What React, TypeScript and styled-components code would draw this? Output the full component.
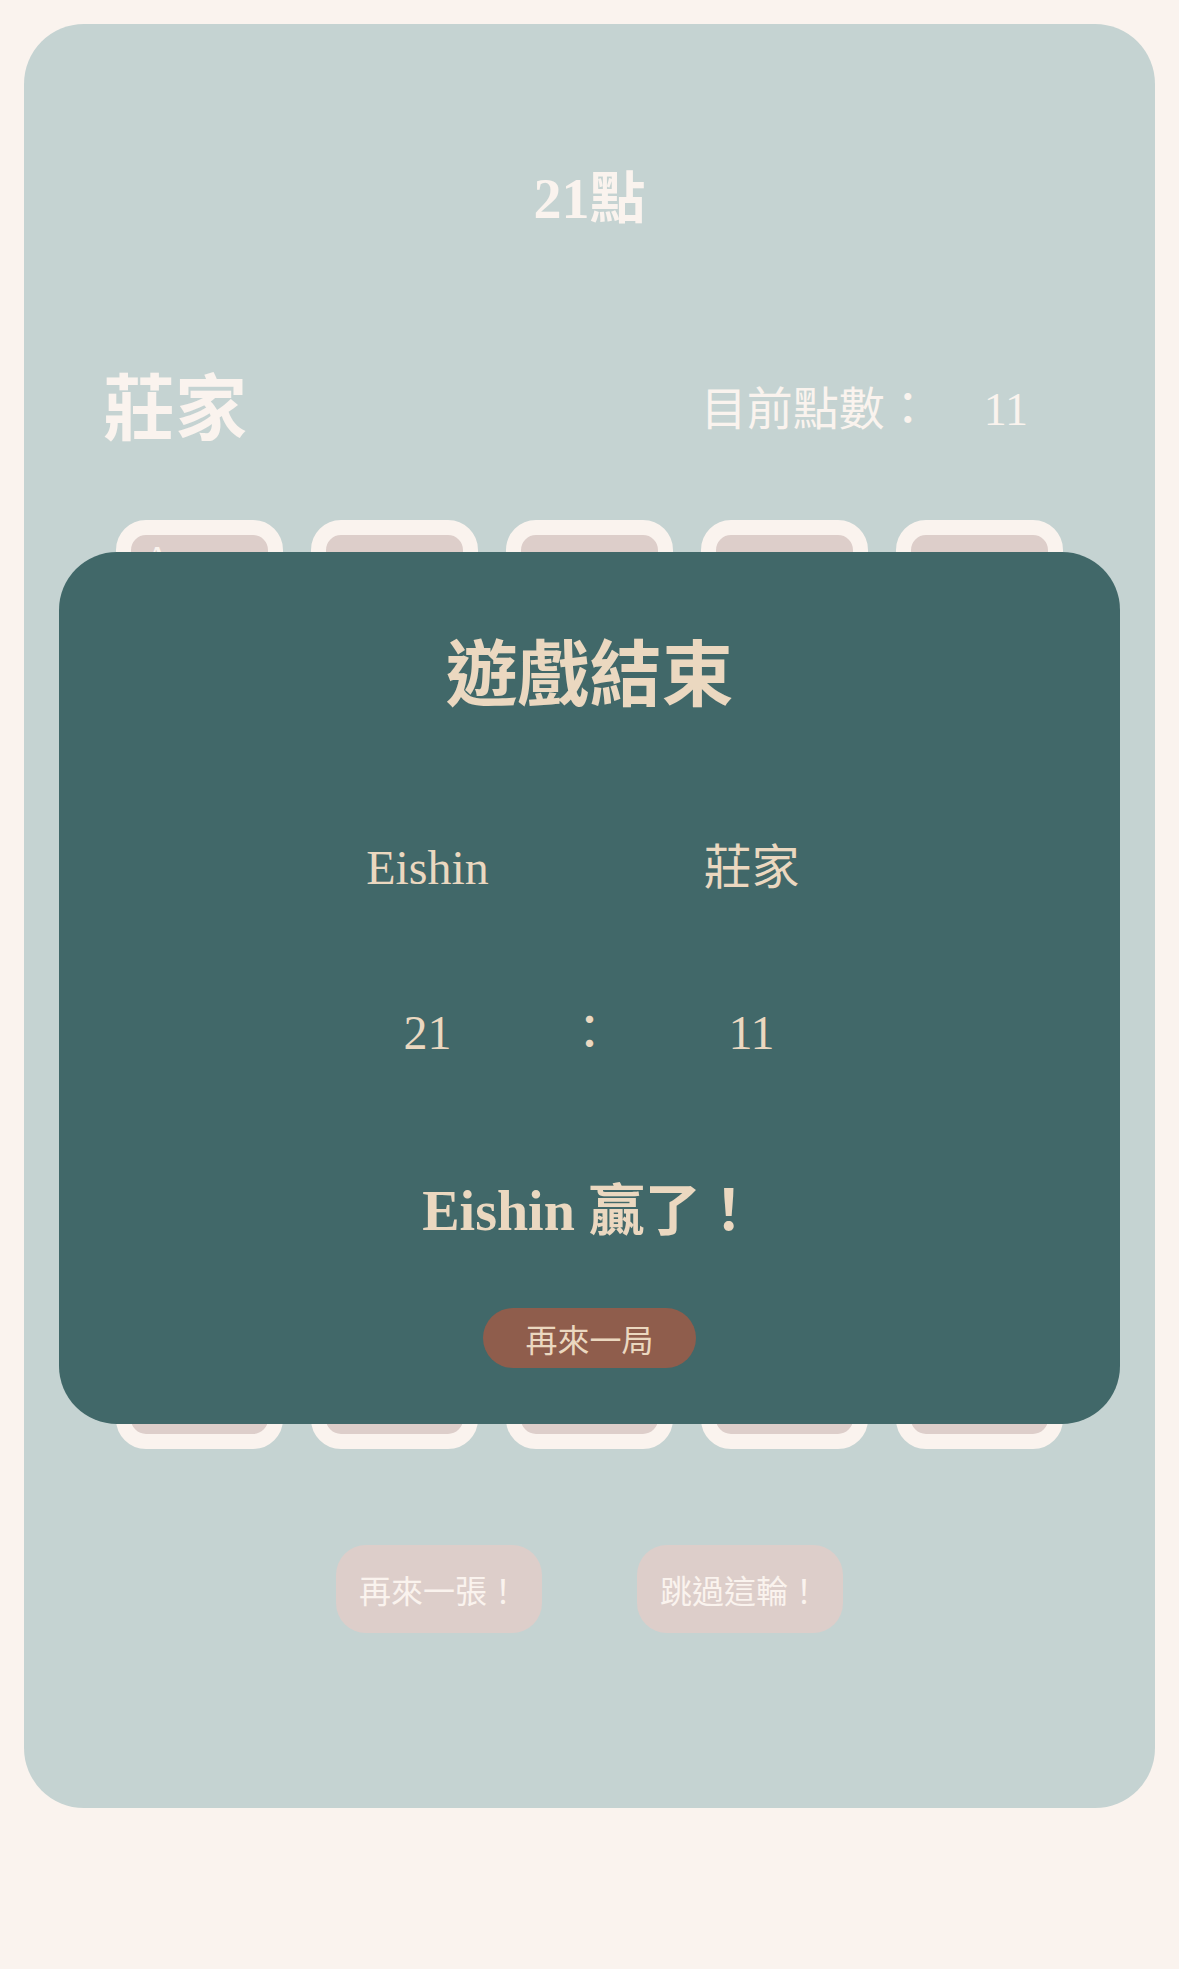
import { createGlobalStyle } from "styled-components";
import styled from "styled-components";

const GlobalStyle = createGlobalStyle`
  html, body {
    margin: 0;
    padding: 0;
    background-color: #faf3ee;
  }
  body {
    font-family: "Liberation Serif", "Noto Sans CJK TC", serif;
  }
`;

const Table = styled.div`
  position: relative;
  width: 1131px;
  height: 1784px;
  margin: 24px;
  padding: 147px 0 0;
  box-sizing: border-box;
  background-color: #c5d3d2;
  border-radius: 60px;
  display: flex;
  flex-direction: column;
  align-items: center;
`;

const Title = styled.h1`
  margin: 0;
  font-size: 56px;
  line-height: 56px;
  font-weight: bold;
  color: #faf3ee;
`;

const Header = styled.div`
  align-self: stretch;
  display: flex;
  align-items: center;
  justify-content: space-between;
  margin-top: 147px;
  padding: 0 127px 0 79px;
`;

const Name = styled.span`
  font-size: 72px;
  line-height: 72px;
  font-weight: bold;
  color: #faf3ee;
`;

const Score = styled.span`
  font-size: 46px;
  line-height: 46px;
  color: #faf3ee;
`;

const ScoreValue = styled.span`
  margin-left: 53px;
`;

const Hand = styled.div`
  display: flex;
  gap: 28px;
  margin-top: 74px;
`;

const Card = styled.div`
  width: 167px;
  height: 929px;
  box-sizing: border-box;
  border: 15px solid #faf3ee;
  border-radius: 30px;
  background-color: #ddceca;
  padding: 5px 12px;
`;

const CardRank = styled.span`
  font-size: 40px;
  line-height: 40px;
  color: #faf3ee;
`;

const Actions = styled.div`
  display: flex;
  gap: 95px;
  margin-top: 96px;
`;

const ActionButton = styled.button`
  height: 88px;
  padding: 0 23px;
  border: none;
  border-radius: 30px;
  background-color: #ddceca;
  color: #faf3ee;
  font-family: "Noto Sans CJK TC", sans-serif;
  font-size: 32px;
  cursor: pointer;
`;

const ResultModal = styled.div`
  position: absolute;
  top: 528px;
  left: 35px;
  right: 35px;
  height: 872px;
  box-sizing: border-box;
  padding: 88px 0 56px;
  background-color: #416869;
  border-radius: 58px;
  color: #ebd8c0;
  display: flex;
  flex-direction: column;
  align-items: center;
`;

const ModalTitle = styled.h2`
  margin: 0;
  font-size: 72px;
  line-height: 72px;
  font-weight: bold;
`;

const ResultRow = styled.div<{ $top: number }>`
  display: grid;
  grid-template-columns: repeat(3, 162px);
  justify-items: center;
  margin-top: ${(p) => p.$top}px;
  font-size: 48px;
  line-height: 48px;
`;

const Winner = styled.div`
  margin-top: 126px;
  font-size: 56px;
  line-height: 56px;
  font-weight: bold;
`;

const RestartButton = styled.button`
  margin-top: 69px;
  height: 60px;
  padding: 0 42px;
  border: none;
  border-radius: 30px;
  background-color: #8f5d4c;
  color: #ebd8c0;
  font-family: "Noto Sans CJK TC", sans-serif;
  font-size: 32px;
  cursor: pointer;
`;

const dealerCards = ["A", "", "", "", ""];

const App = () => {
  return (
    <>
      <GlobalStyle />
      <Table>
        <Title>21點</Title>
        <Header>
          <Name>莊家</Name>
          <Score>
            目前點數：<ScoreValue>11</ScoreValue>
          </Score>
        </Header>
        <Hand>
          {dealerCards.map((rank, index) => (
            <Card key={index}>{rank && <CardRank>{rank}</CardRank>}</Card>
          ))}
        </Hand>
        <Actions>
          <ActionButton>再來一張！</ActionButton>
          <ActionButton>跳過這輪！</ActionButton>
        </Actions>

        <ResultModal>
          <ModalTitle>遊戲結束</ModalTitle>
          <ResultRow $top={132}>
            <span>Eishin</span>
            <span />
            <span>莊家</span>
          </ResultRow>
          <ResultRow $top={117}>
            <span>21</span>
            <span>：</span>
            <span>11</span>
          </ResultRow>
          <Winner>Eishin 贏了！</Winner>
          <RestartButton>再來一局</RestartButton>
        </ResultModal>
      </Table>
    </>
  );
};

export default App;
